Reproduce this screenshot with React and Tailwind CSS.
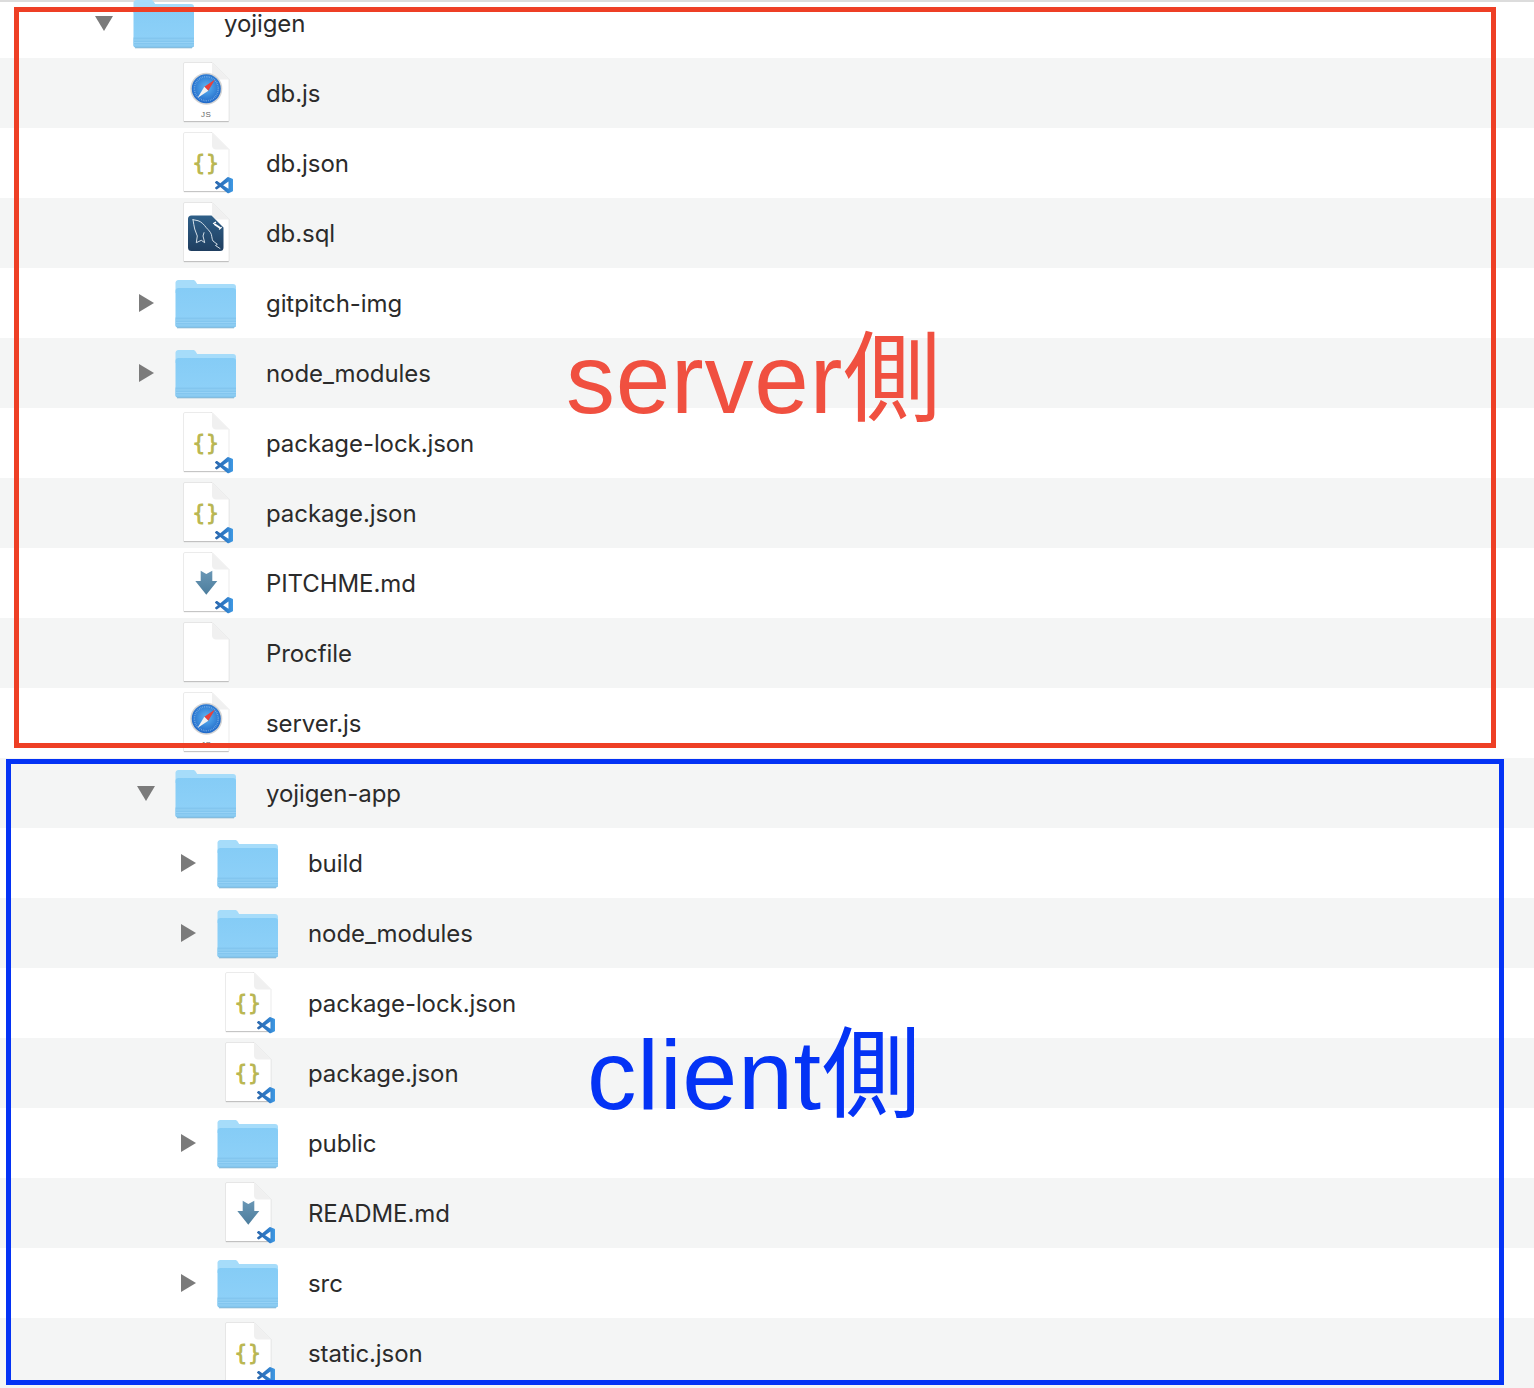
const rows = [
  { d: 0, t: "folder", open: true, n: "yojigen" },
  { d: 1, t: "safari", n: "db.js", label: "JS" },
  { d: 1, t: "json", n: "db.json" },
  { d: 1, t: "sql", n: "db.sql" },
  { d: 1, t: "folder", open: false, n: "gitpitch-img" },
  { d: 1, t: "folder", open: false, n: "node_modules" },
  { d: 1, t: "json", n: "package-lock.json" },
  { d: 1, t: "json", n: "package.json" },
  { d: 1, t: "md", n: "PITCHME.md" },
  { d: 1, t: "blank", n: "Procfile" },
  { d: 1, t: "safari", n: "server.js", label: "JS" },
  { d: 1, t: "folder", open: true, n: "yojigen-app" },
  { d: 2, t: "folder", open: false, n: "build" },
  { d: 2, t: "folder", open: false, n: "node_modules" },
  { d: 2, t: "json", n: "package-lock.json" },
  { d: 2, t: "json", n: "package.json" },
  { d: 2, t: "folder", open: false, n: "public" },
  { d: 2, t: "md", n: "README.md" },
  { d: 2, t: "folder", open: false, n: "src" },
  { d: 2, t: "json", n: "static.json" },
];

const depthClass = ["pl-[94px]", "pl-[136px]", "pl-[178px]"];

function Defs() {
  return (
    <svg className="absolute w-0 h-0" aria-hidden="true">
      <defs>
        <linearGradient id="vsc" x1="0" x2="1" y1="0" y2="0">
          <stop offset="0" stopColor="#2a67ad" />
          <stop offset="0.6" stopColor="#2f7cc9" />
          <stop offset="1" stopColor="#3f9ae4" />
        </linearGradient>
        <linearGradient id="tile" x1="0" x2="0" y1="0" y2="1">
          <stop offset="0" stopColor="#2f5f88" />
          <stop offset="1" stopColor="#1f3e60" />
        </linearGradient>
        <linearGradient id="arrow" x1="0" x2="0" y1="0" y2="1">
          <stop offset="0" stopColor="#6a97b5" />
          <stop offset="1" stopColor="#4c7d9d" />
        </linearGradient>
        <radialGradient id="safari" cx="0.5" cy="0.45" r="0.55">
          <stop offset="0" stopColor="#5db4f2" />
          <stop offset="1" stopColor="#1f68c8" />
        </radialGradient>
        <linearGradient id="front" x1="0" x2="0" y1="0" y2="1">
          <stop offset="0" stopColor="#85ccf6" />
          <stop offset="1" stopColor="#8fd1f8" />
        </linearGradient>
      </defs>
    </svg>
  );
}

function Triangle({ open }) {
  return (
    <div className="w-[20px] mr-[19px] flex justify-center shrink-0">
      {open ? (
        <svg width="18" height="15" viewBox="0 0 18 15"><path d="M0 0H18L9 15Z" fill="#7b7b7b" /></svg>
      ) : (
        <svg width="15" height="18" viewBox="0 0 15 18"><path d="M0 0V18L15 9Z" fill="#7b7b7b" /></svg>
      )}
    </div>
  );
}

function Folder() {
  return (
    <svg width="62" height="70" viewBox="0 0 62 70" className="shrink-0">
      <path d="M.5 15.500a3 3 0 0 1 3-3.500h14.500c1.300 0 2 .5 2.600 1.500l1.600 2.500H58a3 3 0 0 1 3 3V25H.5Z" fill="#a6dcfa" />
      <path d="M.5 23a3 3 0 0 1 3-3H58a3 3 0 0 1 3 3v34a2.500 2.500 0 0 1-2.500 2.500H3A2.500 2.500 0 0 1 .5 57Z" fill="url(#front)" />
      <path d="M.5 49.500H61V57a2.500 2.500 0 0 1-2.500 2.500H3A2.500 2.500 0 0 1 .5 57Z" fill="#83c6ef" />
      <path d="M.5 52h60.500M.5 54.500h60.500M.5 57h60.500" stroke="#9ad6f8" strokeWidth="0.8" />
      <path d="M2 59.800h57" stroke="#6fa9cc" strokeWidth="0.8" />
    </svg>
  );
}

function Sheet({ children }) {
  return (
    <svg width="62" height="70" viewBox="0 0 62 70" className="shrink-0">
      <path d="M8.500 6a1.500 1.500 0 0 1 1.500-1.500H37L54 21.500V62.500a1 1 0 0 1-1 1H9.500a1 1 0 0 1-1-1Z" fill="#ffffff" stroke="#000000" strokeOpacity="0.1" strokeWidth="0.8" />
      <path d="M37 4.500V17a4 4 0 0 0 4 4.500h13Z" fill="#f0f0f0" />
      <path d="M8.800 63.700h44.900" stroke="#000000" strokeOpacity="0.2" strokeWidth="1" />
      {children}
    </svg>
  );
}

function VscBadge() {
  return (
    <g transform="translate(40 49) scale(0.75 0.68)">
      <path fill="url(#vsc)" d="M23.150 2.587L18.210.210a1.494 1.494 0 0 0-1.705.290l-9.460 8.630-4.120-3.128a.999.999 0 0 0-1.276.057L.327 7.261A1 1 0 0 0 .326 8.740L3.899 12 .326 15.260a1 1 0 0 0 .001 1.479L1.650 17.940a.999.999 0 0 0 1.276.057l4.120-3.128 9.460 8.630a1.492 1.492 0 0 0 1.704.290l4.942-2.377A1.500 1.500 0 0 0 24 20.060V3.939a1.500 1.500 0 0 0-.85-1.352zm-5.146 14.861L10.826 12l7.178-5.448v10.896z" />
    </g>
  );
}

function Icon({ t, label }) {
  if (t === "folder") return <Folder />;
  if (t === "blank") return <Sheet />;
  if (t === "json")
    return (
      <Sheet>
        <g fontSize="20.500" fill="#b9b650" stroke="#b9b650" strokeWidth="0.8" textAnchor="middle" fontFamily="'DejaVu Sans', sans-serif">
          <text x="23.800" y="41.700">{"{"}</text>
          <text x="37.600" y="41.700">{"}"}</text>
        </g>
        <VscBadge />
      </Sheet>
    );
  if (t === "md")
    return (
      <Sheet>
        <path d="M25.700 22.700L31.300 26L37.300 22.700V33H42.300L31.300 46.700L20.300 33H25.700Z" fill="url(#arrow)" />
        <VscBadge />
      </Sheet>
    );
  if (t === "sql")
    return (
      <Sheet>
        <path d="M13 21a3.500 3.500 0 0 1 3.500-3.500H36.500L48.500 29.500V49.500a3.500 3.500 0 0 1-3.500 3.500H16.500a3.500 3.500 0 0 1-3.500-3.500Z" fill="url(#tile)" />
        <path d="M18 21.700L23 22.700C26 23.500 29 26.500 31.300 29.700C33.500 32 35.500 34 36.300 36.300C37 39 37 41.500 38 43L42.300 46.300L40.500 47.500L45 50.500M18 21.700C18.500 25 19 28 19.700 31L22.300 38L21.300 44.700L26.300 42.300L29.700 44.700L28 38L29 34.700" fill="none" stroke="#e6eef4" strokeWidth="0.9" strokeLinejoin="round" strokeLinecap="round" />
        <path d="M40 26.500l4.500 3" stroke="#ffffff" strokeWidth="2" strokeLinecap="round" />
        <path d="M38.500 25.500l2-1.200M44.500 31l1.700-1.500" stroke="#ffffff" strokeWidth="1.400" strokeLinecap="round" />
      </Sheet>
    );
  return (
    <Sheet>
      <circle cx="31.300" cy="30.700" r="16" fill="#d4d4d4" />
      <circle cx="31.300" cy="30.700" r="14.500" fill="url(#safari)" />
      <circle cx="31.300" cy="30.700" r="12" fill="none" stroke="#bcdcf6" strokeOpacity="0.6" strokeWidth="1.600" strokeDasharray="0.6 1.200" />
      <path d="M40 21.500L33.300 32.700L29.300 28.700Z" fill="#e8403a" />
      <path d="M22.500 40L29.300 28.700L33.300 32.700Z" fill="#f2f2f2" />
      <text x="31.300" y="59" textAnchor="middle" fontSize="8" letterSpacing="0.6" fill="#666666" fontFamily="'Liberation Sans', sans-serif">{label}</text>
    </Sheet>
  );
}

function Row({ r, i }) {
  return (
    <div className={`h-[70px] flex items-center ${depthClass[r.d]} ${i % 2 === 1 ? "bg-[#f4f5f5]" : ""}`}>
      {r.t === "folder" ? <Triangle open={r.open} /> : <div className="w-[20px] mr-[19px] shrink-0" />}
      <Icon t={r.t} label={r.label} />
      <span className="ml-[29px] pt-[2px] text-[24px] leading-[68px] tracking-[-0.08px] text-[#2b2b2b] font-['Inter',sans-serif]">{r.n}</span>
    </div>
  );
}

export default function App() {
  return (
    <div className="relative h-[1388px] overflow-hidden bg-white">
      <Defs />
      <div className="absolute top-0 left-0 right-0 h-[2px] bg-[#dcdcdc]" />
      <div className="relative -mt-3">
        {rows.map((r, i) => (
          <Row key={i} r={r} i={i} />
        ))}
      </div>
      <div className="absolute left-[14px] top-[7px] w-[1482px] h-[741px] border-[5px] border-[#ee3f25]" />
      <div className="absolute left-[6px] top-[759px] w-[1498px] h-[626px] border-[5px] border-[#0433f5]" />
      <span className="absolute left-[566px] top-[322px] text-[98px] leading-[115px] tracking-[0.800px] whitespace-nowrap text-[#f05040] font-['Liberation_Sans','Noto_Sans_CJK_JP',sans-serif]">server側</span>
      <span className="absolute left-[587px] top-[1017px] text-[99px] leading-[115px] tracking-[0.600px] whitespace-nowrap text-[#0433f5] font-['Liberation_Sans','Noto_Sans_CJK_JP',sans-serif]">client側</span>
    </div>
  );
}
